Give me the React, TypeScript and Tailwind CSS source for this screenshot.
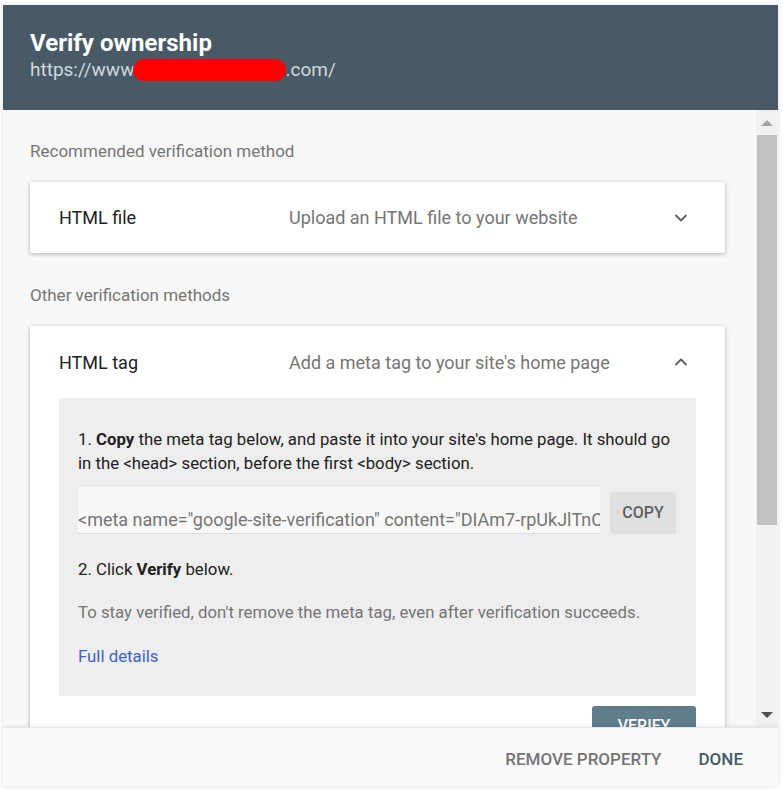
import { ChevronDown, ChevronUp } from "lucide-react";

const font = { fontFamily: "Roboto, 'Liberation Sans', sans-serif" };

const App = () => {
  return (
    <div className="h-[792px] w-[783px] overflow-hidden bg-white pl-[3px] pt-[5px]" style={font}>
      <div className="flex h-[781px] w-[775px] flex-col overflow-hidden bg-[#f8f8f8] shadow-[0_0_4px_rgba(0,0,0,0.15)]">
        {/* HEADER */}
        <div className="h-[105px] shrink-0 bg-[#485a65] px-[27px] pt-[24px]">
          <h1 className="text-[24px] font-bold leading-[28px] text-white">Verify ownership</h1>
          <div className="mt-[1px] flex items-center text-[19px] leading-[24px] text-[#cfd8dc]">
            https://www
            <span className="mx-[-1px] inline-block h-[22px] w-[153px] rounded-full bg-[#ff0000]" />
            .com/
          </div>
        </div>

        {/* BODY */}
        <div className="flex h-[617px] shrink-0">
          <div className="flex-1 overflow-hidden pl-[27px] pr-[31px] pt-[29px] text-[18px]">
            <p className="text-[17px] leading-[24px] text-[#757575]">Recommended verification method</p>

            <div className="mt-[19px] flex h-[71px] items-center rounded-[2px] bg-white pl-[29px] pr-[34px] shadow-[0_1px_4px_rgba(0,0,0,0.3)]">
              <span className="w-[230px] text-[#212121]">HTML file</span>
              <span className="flex-1 text-[#757575]">Upload an HTML file to your website</span>
              <ChevronDown size={20} strokeWidth={2.25} className="text-[#616161]" />
            </div>

            <p className="mt-[30px] text-[17px] leading-[24px] text-[#757575]">Other verification methods</p>

            <div className="mt-[19px] rounded-[2px] bg-white px-[29px] pb-[10px] shadow-[0_1px_4px_rgba(0,0,0,0.3)]">
              <div className="flex h-[72px] items-center pr-[5px]">
                <span className="w-[230px] text-[#212121]">HTML tag</span>
                <span className="flex-1 text-[#757575]">Add a meta tag to your site's home page</span>
                <ChevronUp size={20} strokeWidth={2.25} className="text-[#616161]" />
              </div>

              <div className="bg-[#eeeeee] px-[19px] pb-[28px] pt-[29px] text-[16.8px] leading-[24px] text-[#212121]">
                <p>
                  1. <b>Copy</b> the meta tag below, and paste it into your site's home page. It should go in the
                  &lt;head&gt; section, before the first &lt;body&gt; section.
                </p>
                <div className="mt-[12px] flex items-end gap-[10px]">
                  <div className="flex h-[47px] w-[522px] shrink-0 items-end overflow-hidden whitespace-nowrap border-b border-[#dcdcdc] bg-[#f8f8f8] pb-[1px] text-[18px] text-[#757575]">
                    &lt;meta name="google-site-verification" content="DIAm7-rpUkJlTnCq0x9Vb" /&gt;
                  </div>
                  <button className="h-[42px] w-[66px] rounded-[3px] bg-[#e0e0e0] text-[16px] font-medium text-[#616161]">
                    COPY
                  </button>
                </div>
                <p className="mt-[23px]">
                  2. Click <b>Verify</b> below.
                </p>
                <p className="mt-[19px] text-[#757575]">
                  To stay verified, don't remove the meta tag, even after verification succeeds.
                </p>
                <p className="mt-[20px] text-[#3c63cc]">Full details</p>
              </div>

              <div className="mt-[10px] flex justify-end">
                <button className="h-[40px] w-[104px] rounded-[3px] bg-[#607d8b] text-[16px] font-medium text-white">
                  VERIFY
                </button>
              </div>
            </div>
          </div>

          {/* SCROLLBAR */}
          <div className="flex w-[22px] flex-col items-center bg-[#f1f1f1]">
            <div className="flex h-[25px] items-center">
              <div className="h-0 w-0 border-x-[6px] border-b-[6px] border-x-transparent border-b-[#a3a3a3]" />
            </div>
            <div className="h-[390px] w-[20px] bg-[#c1c1c1]" />
            <div className="flex-1" />
            <div className="flex h-[25px] items-center">
              <div className="h-0 w-0 border-x-[6px] border-t-[6px] border-x-transparent border-t-[#505050]" />
            </div>
          </div>
        </div>

        {/* FOOTER */}
        <div className="relative flex flex-1 items-center justify-end gap-[37px] border-t border-[#e6e6e6] bg-[#fafafa] pr-[35px] pt-[6px] text-[17px] font-medium shadow-[0_-2px_4px_rgba(0,0,0,0.06)]">
          <span className="text-[#757575]">REMOVE PROPERTY</span>
          <span className="text-[#455a64]">DONE</span>
        </div>
      </div>
    </div>
  );
};

export default App;
